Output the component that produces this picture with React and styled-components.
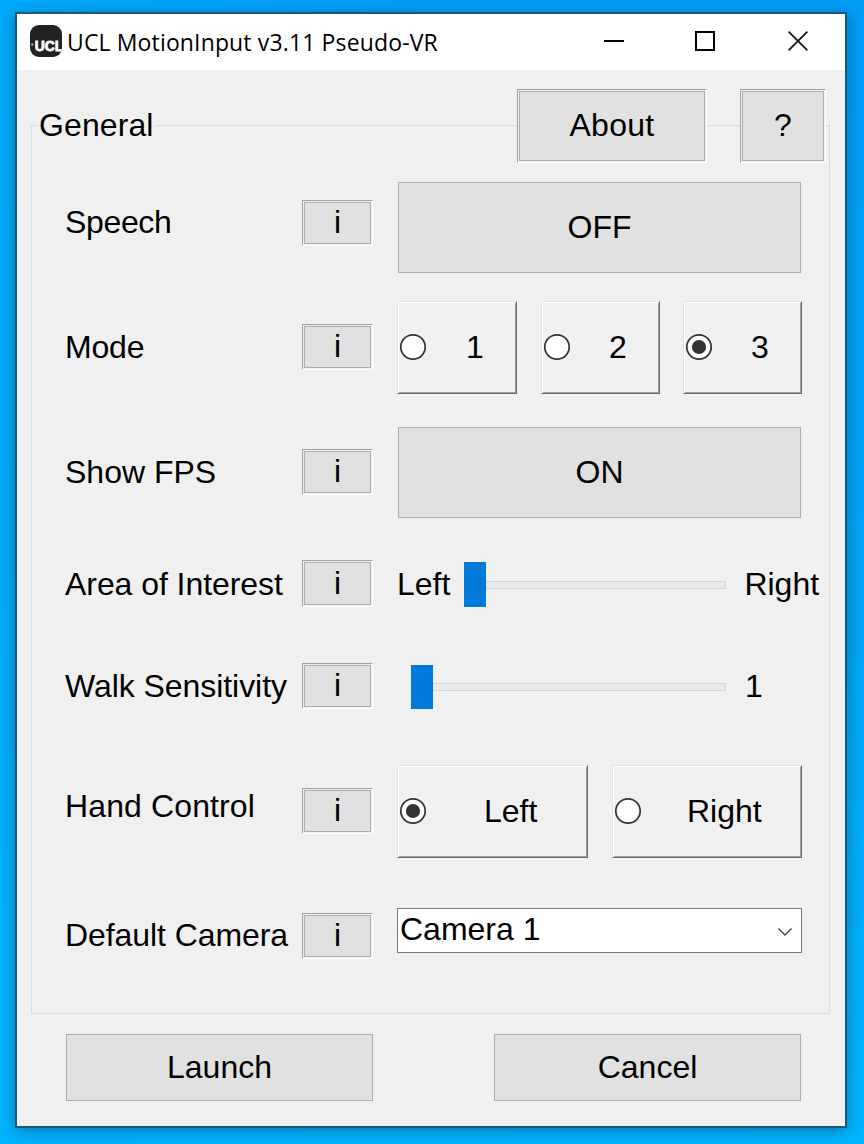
import React from "react";
import styled, { createGlobalStyle } from "styled-components";

const Global = createGlobalStyle`
  * { box-sizing: border-box; }
  body { margin: 0; }
  button { font: inherit; color: inherit; border-radius: 0; padding: 0; }
`;

const Desktop = styled.div`
  width: 864px;
  height: 1144px;
  padding: 12px 17px 16px 15px;
  overflow: hidden;
  background:
    linear-gradient(90deg, rgba(0, 180, 255, 0.6), rgba(0, 180, 255, 0) 50%),
    linear-gradient(180deg, #009ef8 0%, #00a6f6 50%, #00b6ff 100%);
  font-family: "Liberation Sans", Arial, sans-serif;
  font-size: 32px;
  line-height: 36px;
  color: #000;
`;

const Window = styled.main`
  width: 832px;
  height: 1116px;
  border: 2px solid #1c5874;
  background: #f0f0f0;
  box-shadow: 0 3px 15px rgba(0, 40, 70, 0.42);
`;

const TitleBar = styled.header`
  height: 56px;
  padding: 0 37px 0 13px;
  display: flex;
  align-items: center;
  background: #fff;
`;

const Title = styled.h1`
  margin: 0 auto 0 5px;
  font: 400 23px/32px "Open Sans", "Noto Sans", sans-serif;
  letter-spacing: 0.14px;
  white-space: nowrap;
`;

const Logo = styled.svg`
  width: 32px;
  height: 32px;
  flex: none;
  margin-top: -2px;
`;

const Caption = styled.svg`
  width: 20px;
  height: 20px;
  flex: none;
  margin: -2px 0 0 ${(p) => p.$gap}px;
`;

const Group = styled.section`
  width: 799px;
  height: 889px;
  margin: 55px 0 0 14px;
  border: 1px solid #dcdcdc;
`;

const GroupHeader = styled.div`
  height: 74px;
  margin: -37px 3px 19px 6px;
  display: flex;
  align-items: center;
`;

const Legend = styled.h2`
  width: 117px;
  margin: -2px auto 0 0;
  padding-left: 1px;
  font-size: 32px;
  font-weight: 400;
  line-height: 36px;
  background: #f0f0f0;
`;

const Text = styled.span`
  white-space: pre;
  letter-spacing: ${(p) => p.$ls || 0}px;
`;

const Groove = styled.div`
  width: ${(p) => p.$w}px;
  height: ${(p) => p.$h}px;
  margin: ${(p) => p.$top || 0}px 0 0 ${(p) => p.$left || 0}px;
  flex: none;
  padding: 1px;
  display: flex;
  border: 1px solid;
  border-color: #a0a0a0 #fff #fff #a0a0a0;
  background: #f0f0f0;
`;

const PushButton = styled.button`
  width: ${(p) => (p.$w ? `${p.$w}px` : "100%")};
  height: ${(p) => (p.$h ? `${p.$h}px` : "100%")};
  margin-left: ${(p) => p.$left || 0}px;
  padding-bottom: 2px;
  display: flex;
  align-items: center;
  justify-content: center;
  background: #e1e1e1;
  border: 1px solid #adadad;
`;

const Row = styled.div`
  height: ${(p) => p.$h}px;
  margin-bottom: ${(p) => p.$after}px;
  padding-left: 33px;
  display: grid;
  grid-template-columns: 237px 95px 1fr;
  align-items: start;
`;

const RowLabel = styled.div`
  margin-top: ${(p) => p.$top}px;
  white-space: nowrap;
`;

const Controls = styled.div`
  display: flex;
  align-items: flex-start;
  gap: ${(p) => p.$gap || 0}px;
`;

const RadioBox = styled.div`
  width: ${(p) => p.$w}px;
  height: 93px;
  margin-left: ${(p) => p.$left || 0}px;
  padding: 0 0 2px 1px;
  display: flex;
  align-items: center;
  border: 1px solid;
  border-color: #e3e3e3 #696969 #696969 #e3e3e3;
  box-shadow: inset 1px 1px #fff, inset -1px -1px #a0a0a0;
`;

const Dot = styled.svg`
  width: 28px;
  height: 28px;
  margin-right: ${(p) => p.$gap}px;
`;

const Slider = styled.div`
  width: ${(p) => p.$w}px;
  height: ${(p) => p.$h}px;
  margin: 2px 0 0 14px;
  display: flex;
  align-items: center;
`;

const Thumb = styled.div`
  width: 22px;
  height: 100%;
  background: #007ad9;
`;

const Track = styled.div`
  flex: 1;
  height: 8px;
  border: 1px solid #d6d6d6;
  border-left: 0;
  background: #e7eaea;
`;

const SideText = styled.div`
  margin: ${(p) => p.$top}px 0 0 ${(p) => p.$left}px;
`;

const Combo = styled.div`
  width: 405px;
  height: 45px;
  padding: 0 7px 3px 2px;
  display: flex;
  align-items: center;
  justify-content: space-between;
  border: 1px solid #7a7a7a;
  background: #fff;
`;

const Chevron = styled.svg`
  width: 16px;
  height: 10px;
  margin: 5px 1px 0 0;
`;

const Footer = styled.footer`
  padding: 20px 0 0 49px;
  display: flex;
  gap: 121px;
`;

function Info({ top, h = 46 }) {
  return (
    <Groove $w={71} $h={h} $top={top}>
      <PushButton>i</PushButton>
    </Groove>
  );
}

function Radio({ w, left, gap, checked, children }) {
  return (
    <RadioBox $w={w} $left={left}>
      <Dot $gap={gap} viewBox="0 0 28 28">
        <circle cx="14" cy="14" r="12.2" fill="#fff" stroke="#333" strokeWidth="1.7" />
        {checked && <circle cx="14" cy="14" r="7.1" fill="#333" />}
      </Dot>
      <Text>{children}</Text>
    </RadioBox>
  );
}

function Setting({ label, ls, labelTop, infoTop, infoH, h, after, gap, children }) {
  return (
    <Row $h={h} $after={after}>
      <RowLabel $top={labelTop}><Text $ls={ls}>{label}</Text></RowLabel>
      <Info top={infoTop} h={infoH} />
      <Controls $gap={gap}>{children}</Controls>
    </Row>
  );
}

export default function App() {
  return (
    <Desktop>
      <Global />
      <Window>
        <TitleBar>
          <Logo viewBox="0 0 32 32">
            <defs><clipPath id="badge"><rect width="32" height="32" rx="9" /></clipPath></defs>
            <g clipPath="url(#badge)">
              <rect width="32" height="32" fill="#222" />
              <text x="4.8" y="26.200" fontFamily="Liberation Sans, sans-serif" fontSize="14" fontWeight="700" fill="#fff" stroke="#fff" strokeWidth="0.8" textLength="28.500" lengthAdjust="spacingAndGlyphs">UCL</text>
              <rect x="1.2" y="18.500" width="2" height="2" fill="#bbb" />
            </g>
          </Logo>
          <Title>UCL MotionInput v3.11 Pseudo-VR</Title>
          <Caption $gap={0} viewBox="0 0 20 20"><path d="M0 10H20" stroke="#000" strokeWidth="2" /></Caption>
          <Caption $gap={71} viewBox="0 0 20 20"><rect x="1" y="1" width="18" height="18" fill="none" stroke="#000" strokeWidth="2" /></Caption>
          <Caption $gap={73} viewBox="0 0 20 20"><path d="M.6.6 19.4 19.4M19.4.6.6 19.4" stroke="#111" strokeWidth="1.7" /></Caption>
        </TitleBar>
        <Group>
          <GroupHeader>
            <Legend><Text $ls={0.1}>General</Text></Legend>
            <Groove $w={190} $h={74}><PushButton><Text $ls={0.3}>About</Text></PushButton></Groove>
            <Groove $w={86} $h={74} $left={33}><PushButton>?</PushButton></Groove>
          </GroupHeader>
          <Setting label="Speech" ls={-0.35} labelTop={22} infoTop={18} h={91} after={28}>
            <PushButton $w={403} $h={91} $left={1}>OFF</PushButton>
          </Setting>
          <Setting label="Mode" ls={-0.2} labelTop={28} infoTop={23} h={93} after={33}>
            <Radio w={120} gap={39}>1</Radio>
            <Radio w={119} left={24} gap={38}>2</Radio>
            <Radio w={119} left={23} gap={38} checked>3</Radio>
          </Setting>
          <Setting label="Show FPS" labelTop={27} infoTop={22} h={91} after={42}>
            <PushButton $w={403} $h={91} $left={1}>ON</PushButton>
          </Setting>
          <Setting label="Area of Interest" ls={-0.06} labelTop={6} infoTop={0} infoH={47} h={47} after={56}>
            <SideText $top={6} $left={0}><Text>Left</Text></SideText>
            <Slider $w={262} $h={45}><Thumb /><Track /></Slider>
            <SideText $top={6} $left={18}><Text>Right</Text></SideText>
          </Setting>
          <Setting label="Walk Sensitivity" ls={-0.06} labelTop={5} infoTop={0} h={46} after={56}>
            <Slider $w={315} $h={44}><Thumb /><Track /></Slider>
            <SideText $top={5} $left={19}>1</SideText>
          </Setting>
          <Setting label="Hand Control" ls={0.12} labelTop={23} infoTop={23} h={93} after={50} gap={24}>
            <Radio w={191} gap={57} checked>Left</Radio>
            <Radio w={190} gap={45}>Right</Radio>
          </Setting>
          <Setting label="Default Camera" ls={-0.08} labelTop={9} infoTop={5} h={51} after={0}>
            <Combo>
              <Text>Camera 1</Text>
              <Chevron viewBox="0 0 16 10"><path d="M1.5 1.5 8 8l6.500-6.500" fill="none" stroke="#444" strokeWidth="1.3" /></Chevron>
            </Combo>
          </Setting>
        </Group>
        <Footer>
          <PushButton $w={307} $h={67}>Launch</PushButton>
          <PushButton $w={307} $h={67}>Cancel</PushButton>
        </Footer>
      </Window>
    </Desktop>
  );
}
